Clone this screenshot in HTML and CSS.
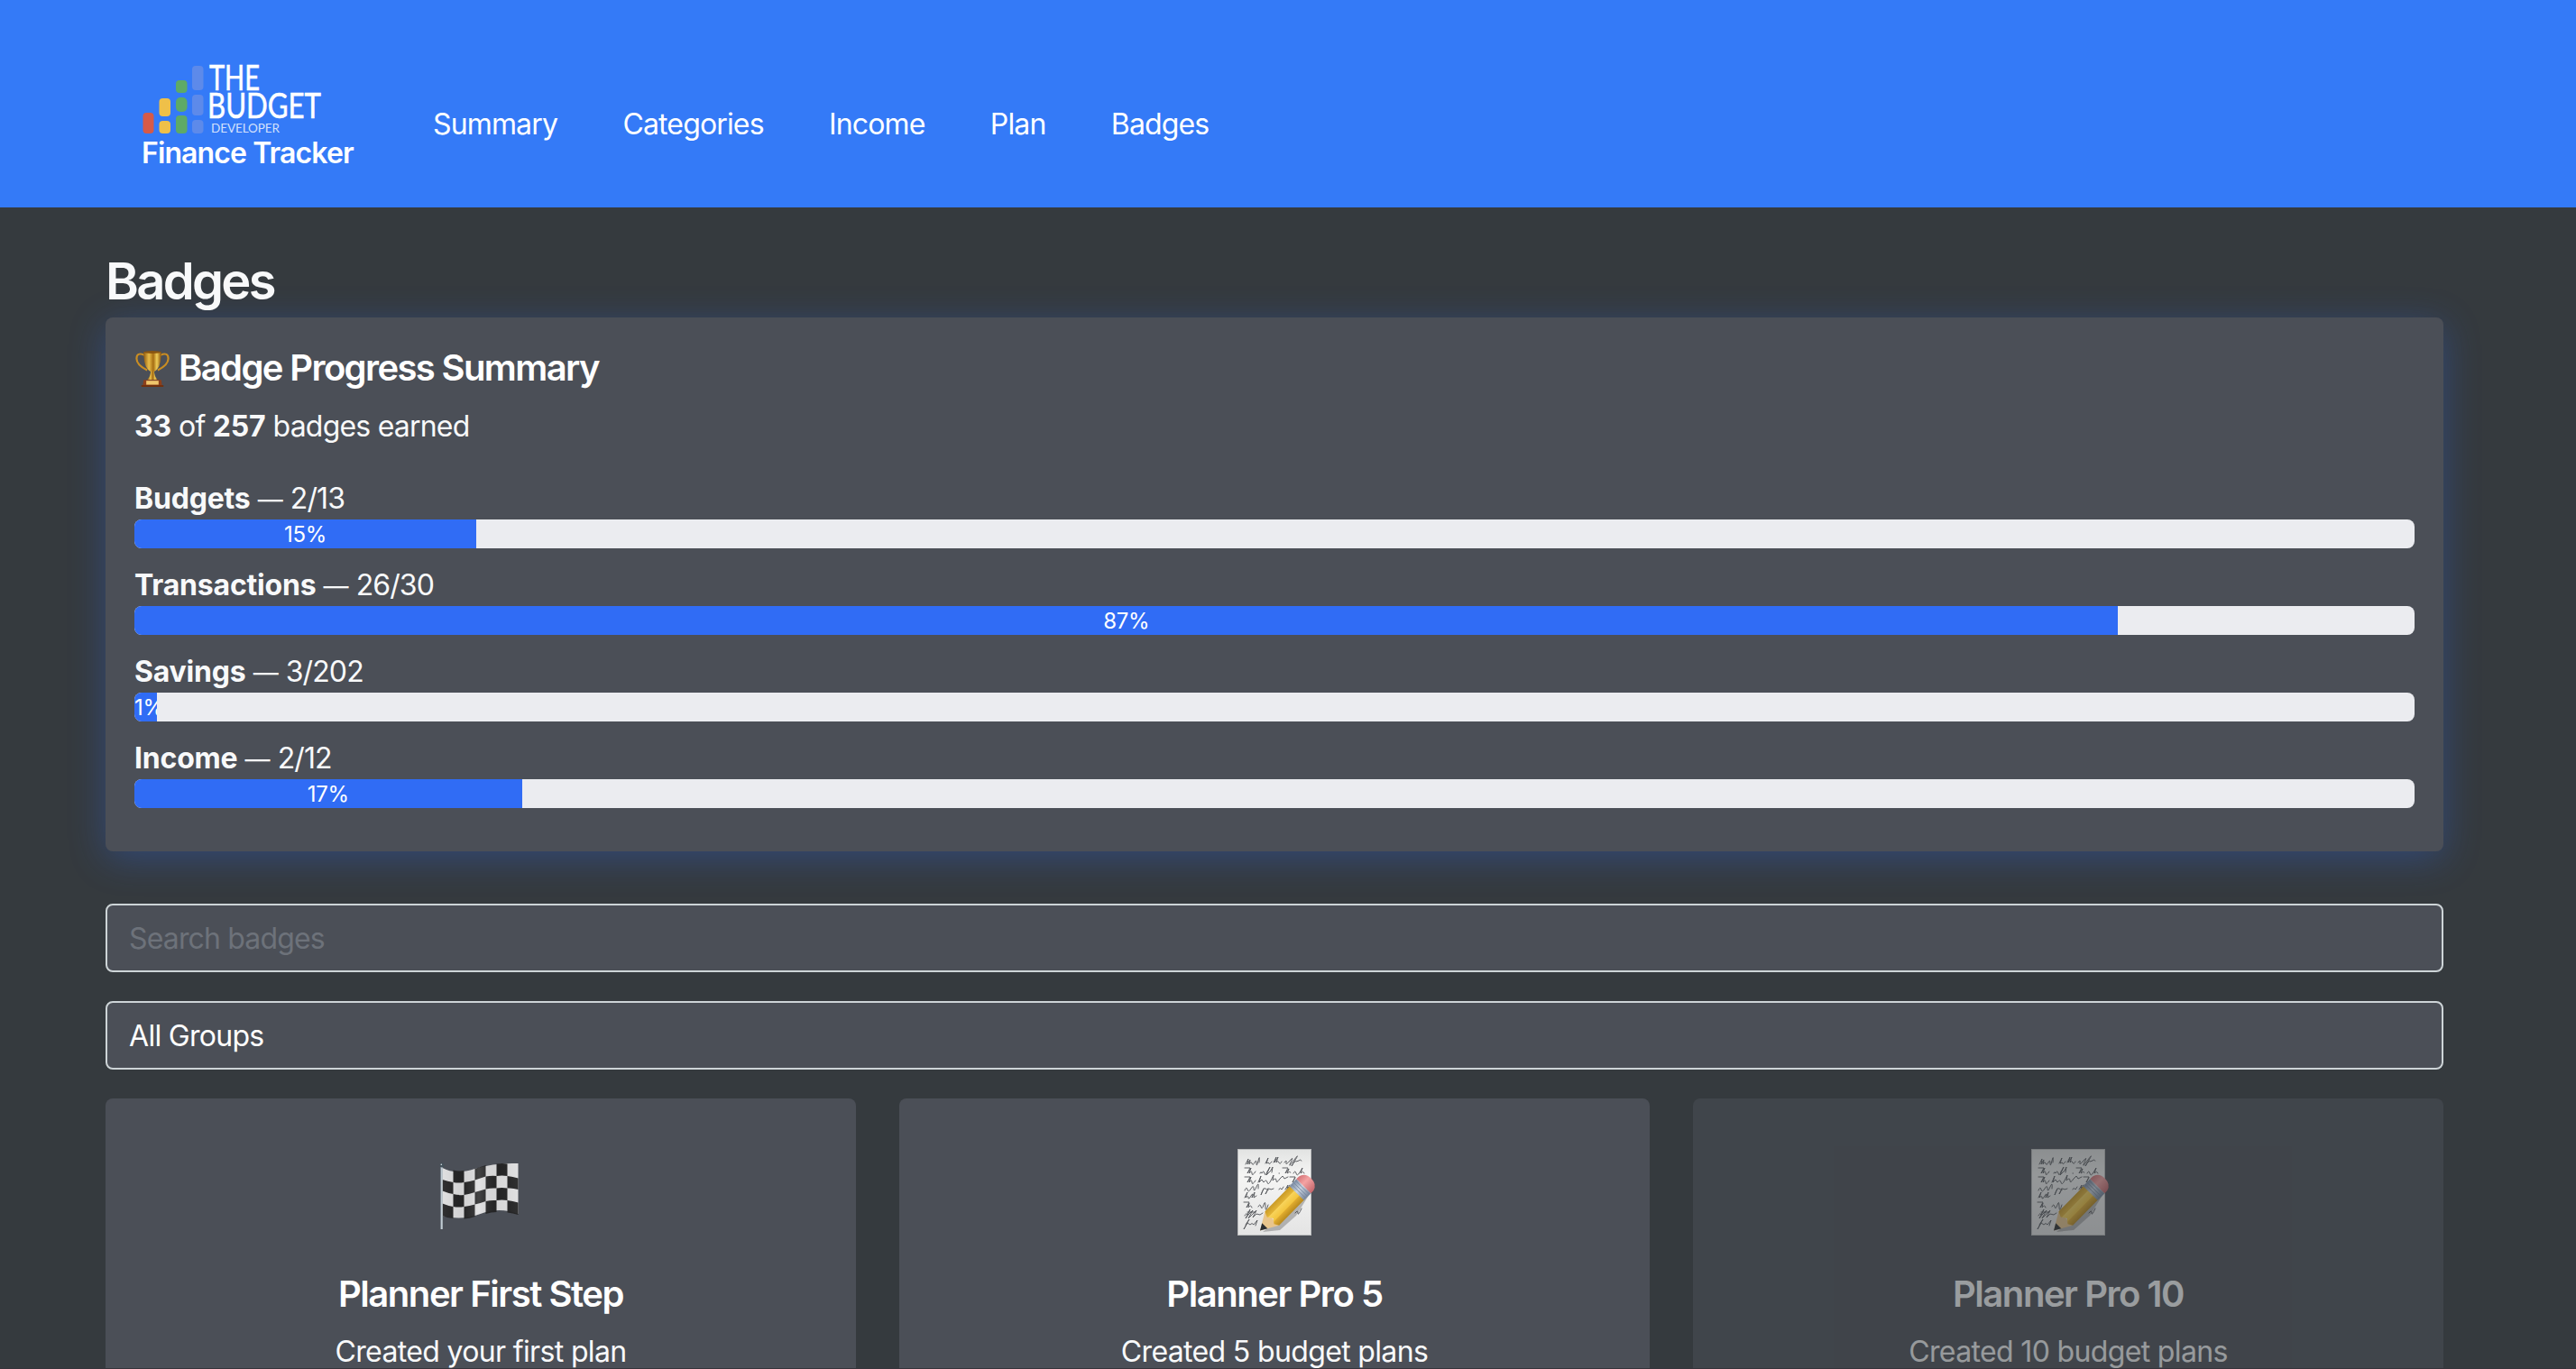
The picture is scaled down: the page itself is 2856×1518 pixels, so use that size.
FILE: index.html
```html
<!DOCTYPE html>
<html lang="en">
<head>
<meta charset="utf-8">
<title>Badges - Finance Tracker</title>
<link rel="stylesheet" href="styles.css">
</head>
<body>
<svg width="0" height="0" class="defs" aria-hidden="true">
  <defs>
    <linearGradient id="gold" x1="0" x2="1" y1="0" y2="0"><stop offset="0" stop-color="#8f5a10"/><stop offset=".3" stop-color="#e9bd48"/><stop offset=".55" stop-color="#a56c12"/><stop offset=".75" stop-color="#efcd58"/><stop offset="1" stop-color="#8a520b"/></linearGradient>
    <linearGradient id="paper" x1="0" x2="0" y1="0" y2="1"><stop offset="0" stop-color="#e2e3e2"/><stop offset=".3" stop-color="#f5f5f4"/><stop offset="1" stop-color="#e4e4e4"/></linearGradient>
    <linearGradient id="pencil" x1="0" x2="0" y1="0" y2="1"><stop offset="0" stop-color="#c99a26"/><stop offset=".3" stop-color="#e3b436"/><stop offset=".34" stop-color="#f8d35a"/><stop offset=".66" stop-color="#f3c53f"/><stop offset=".7" stop-color="#dfab2e"/><stop offset="1" stop-color="#b98a1e"/></linearGradient>
    <linearGradient id="metal" x1="0" x2="0" y1="0" y2="1"><stop offset="0" stop-color="#7b8ba3"/><stop offset=".45" stop-color="#c9d3df"/><stop offset="1" stop-color="#76859b"/></linearGradient>
    <linearGradient id="rubber" x1="0" x2="0" y1="0" y2="1"><stop offset="0" stop-color="#d47478"/><stop offset=".4" stop-color="#f4a3a3"/><stop offset="1" stop-color="#c4666b"/></linearGradient>
    <symbol id="memo" viewBox="0 0 96 104">
      <rect x="7.500" y="4.500" width="81" height="95" fill="url(#paper)" stroke="#bcbdbe" stroke-width="1"/>
      <g fill="none" stroke="#585b5f" stroke-width=".95" stroke-linecap="round" stroke-linejoin="round" transform="translate(1 0)">
        <path d="M15 21l3-6-1 6 3-5-1 5q2-4 3-1t3-1 2 1 2-3 1 2M37 20l3-6-2 6q3-2 3 0t3-2M46 19l3-6-2 6 4-6-2 6q2-3 3 0t3-1M58 19q3-4 2 0t4-2 1 2 4-3-3 7q4-7 5-5l3-1q1-2 3 0"/>
        <path d="M14 25h6l-3 6 4-6-2 6q3-4 3 0t4-2M31 31q1-3 2 0 2-4 3 0t3-2l3-5-4 9 5-5 2-4-1 6M52 31h.5M56 25h6l-3 6 4-5-2 5q3-3 4-1M68 31q2-4 3 0t4-1l3-5-2 6q3-3 4 0"/>
        <path d="M14 35h6l-3 6 4-6-2 6q3-4 3 0t4-2M29 41l3-7-2 7 3-3 2 3q3-4 4 0t4-2l3-6-1 6q4-4 4 0t4-2l3-3 2 3 4-2M64 35h6l-3 6 3-5"/>
        <path d="M14 50q2-5 3-1t4-1 3 0 3-2 2 2M35 48l-3 7q3-9 5-7t3 0-3 6q4-8 6-5l3-1M52 49q1-3 3 0l2-3M59 49l3-5-1 5 3-5"/>
        <path d="M14 58l3-6-2 6q3-3 3 0t3-2 1 2l3-6-1 6 3-2"/>
        <path d="M13 63h6l-3 6 3-5-1 5q3-4 4 0M29 68q2-4 3 0t3-2 2 2 3-2M44 68q2-4 3 0t4-4"/>
        <path d="M14 78q2-4 3-1l3-6-5 10 3-4 5-5-5 9 5-5 4-4-4 8 4-4 4 1 3-2M17 74h9M70 75q3-4 3 0t4-5"/>
        <path d="M15 88l4-6-6 11 4-7 3 2q2-3 4 0l4-5-2 6M34 88q1-3 2 0l3-6-5 11"/>
      </g>
      <path d="M35 96L66 72 88 44 93 44 72 78 54 94Z" fill="#333" opacity=".3"/>
      <g transform="translate(32 94.500) rotate(-45.500)">
        <path d="M0 0L19-11 19 11Z" fill="#e9c58c"/><path d="M0 0L7.500-4.300 7.500 4.300Z" fill="#2b2d30"/>
        <path d="M19-11H59V11H19L16 6 20 1 16-5Z" fill="url(#pencil)"/>
        <rect x="58" y="-11.300" width="11" height="22.600" fill="url(#metal)"/>
        <path d="M61-11v22M64-11v22M67-11v22" stroke="#7787a0" stroke-width=".8"/>
        <path d="M69-11.300h4q8 2 8 11.300t-8 11.300h-4Z" fill="url(#rubber)"/>
      </g>
    </symbol>
  </defs>
</svg>
<header class="navbar">
  <a class="brand">
    <svg class="logo" viewBox="0 0 202 80">
      <g transform="translate(.5 1)"><rect x="0" y="55" width="12" height="23" rx="4" fill="#d65a48"/>
      <rect x="18" y="39" width="12.500" height="20" rx="4" fill="#efc049"/><rect x="18" y="64" width="12.500" height="14" rx="4" fill="#efc049"/>
      <g fill="#5eaa66"><rect x="36.500" y="19" width="12.500" height="14" rx="4"/><rect x="36.500" y="38" width="12.500" height="16" rx="5"/><rect x="36.500" y="58" width="12.500" height="20" rx="4"/></g>
      <g fill="#5d8aea"><rect x="54.500" y="3" width="12.500" height="27" rx="4"/><rect x="54.500" y="35" width="12.500" height="23" rx="4"/><rect x="54.500" y="63" width="12.500" height="15" rx="4"/></g></g>
      <g class="logo-text"><text x="74" y="31" font-size="39" textLength="56" lengthAdjust="spacingAndGlyphs">THE</text>
      <text x="72" y="62" font-size="39" textLength="126" lengthAdjust="spacingAndGlyphs">BUDGET</text>
      <text class="logo-small" x="76" y="78" font-size="13.500" textLength="76" lengthAdjust="spacing">DEVELOPER</text></g>
    </svg>
    <span class="brand-name">Finance Tracker</span>
  </a>
  <nav class="links"><a>Summary</a><a>Categories</a><a>Income</a><a>Plan</a><a>Badges</a></nav>
</header>
<main class="container">
  <h1 class="page-title">Badges</h1>
  <section class="summary">
    <h2 class="summary-title"><svg class="trophy" viewBox="0 0 40 42">
      <path d="M11 6Q2 2 2 10q0 7 12 13M29 6q9-4 9 4 0 7-12 13" fill="none" stroke="#c98d22" stroke-width="2.200"/>
      <path d="M10 2h20q0 14-4 19-3 4-6 4t-6-4Q10 16 10 2Z" fill="url(#gold)"/><ellipse cx="20" cy="2.500" rx="10" ry="1.500" fill="#8a5510"/>
      <path d="M18 24h4q0 6 4 10H14q4-4 4-10Z" fill="url(#gold)"/><path d="M10 34h20l1 7H9Z" fill="#8c3f1b"/><rect x="13" y="35" width="14" height="4.500" fill="#efc66c"/><path d="M7.500 40h25v2h-25Z" fill="#70300f"/>
    </svg>Badge Progress Summary</h2>
    <p class="earned"><strong>33</strong> of <strong>257</strong> badges earned</p>
    <div class="group"><p class="group-name"><strong>Budgets</strong> <span class="dash">—</span> 2/13</p><div class="progress"><div class="bar" style="width:15%">15%</div></div></div>
    <div class="group"><p class="group-name"><strong>Transactions</strong> <span class="dash">—</span> 26/30</p><div class="progress"><div class="bar" style="width:87%">87%</div></div></div>
    <div class="group"><p class="group-name"><strong>Savings</strong> <span class="dash">—</span> 3/202</p><div class="progress"><div class="bar" style="width:1%">1%</div></div></div>
    <div class="group"><p class="group-name"><strong>Income</strong> <span class="dash">—</span> 2/12</p><div class="progress"><div class="bar" style="width:17%">17%</div></div></div>
  </section>
  <input class="control search" type="text" placeholder="Search badges">
  <select class="control groups"><option>All Groups</option></select>
  <div class="badges">
    <article class="badge">
      <svg class="badge-icon" viewBox="0 0 96 104">
        <defs><linearGradient id="fold" x1="0" x2="1" y1="0" y2="0"><stop offset="0" stop-color="#fff" stop-opacity=".05"/><stop offset=".22" stop-color="#000" stop-opacity=".05"/><stop offset=".48" stop-color="#fff" stop-opacity=".14"/><stop offset=".75" stop-color="#000" stop-opacity=".03"/><stop offset="1" stop-color="#fff" stop-opacity=".05"/></linearGradient></defs>
        <g transform="translate(2.500 4)">
        <path d="M3 21Q17 29 39 22T87 16V72Q66 64 45 72T3 74Z" fill="#dededf"/>
        <g fill="#252526">
          <path d="M15 23.500q6 1.500 12 .5V37q-6 1-12 0ZM39 22q6-2 12-4V30.500q-6 2-12 4ZM63 16.500q6-1 12 0V30q-6-1-12 0Z"/>
          <path d="M3 34q6 2 12 3V50q-6-1-12-3.500ZM27 37q6-1 12-2.500V48q-6 2-12 3ZM51 30.500q6-1 12-.5V43.500q-6-.5-12 1ZM75 30q6 .5 12 2.500V45q-6-2-12-1.500Z"/>
          <path d="M15 50q6 1.500 12 1V64q-6 1-12 0ZM39 48q6-2 12-3.500V58q-6 2-12 3.500ZM63 43.500q6-1 12 0V57q-6-1-12 0Z"/>
          <path d="M3 60.500q6 2.500 12 3.500V77q-6 0-12-3ZM27 64q6-1 12-2.500V75q-6 2-12 2.500ZM51 58q6-1.500 12-1V70q-6 0-12 2ZM75 57q6 .5 12 2.500V73q-6-2-12-2.500Z"/>
        </g>
        <path d="M3 21Q17 29 39 22T87 16V72Q66 64 45 72T3 74Z" fill="url(#fold)"/>
        <path d="M2 20V89" stroke="#a9b7c0" stroke-width="2"/><path d="M2.500 20V89" stroke="#e5edf1" stroke-width=".8"/><circle cx="2.500" cy="18" r="2.500" fill="#44515a"/><circle cx="1.800" cy="17.200" r=".8" fill="#dce5ec"/>
        </g>
      </svg>
      <h3 class="badge-title">Planner First Step</h3><p class="badge-text">Created your first plan</p>
    </article>
    <article class="badge"><svg class="badge-icon"><use href="#memo"/></svg><h3 class="badge-title">Planner Pro 5</h3><p class="badge-text">Created 5 budget plans</p></article>
    <article class="badge locked"><svg class="badge-icon"><use href="#memo"/></svg><h3 class="badge-title">Planner Pro 10</h3><p class="badge-text">Created 10 budget plans</p></article>
  </div>
</main>
</body>
</html>
```
FILE: styles.css
```css
* { box-sizing: border-box; }
html, body { height: 100%; overflow: hidden; }
body { margin: 0; background: #353a3e; color: #f8f9fa; font: 400 32px/48px Inter, "Liberation Sans", sans-serif; letter-spacing: -0.65px; }
body::after { content: ""; position: fixed; left: 0; right: 0; bottom: 0; height: 1px; background: #36343b; }
h1, h2, h3, p { margin: 0; }
.defs { position: absolute; }
.navbar { height: 230px; background: #347af7; color: #fff; display: flex; align-items: flex-start; padding: 69px 0 0 158px; }
.brand { display: flex; flex-direction: column; width: 322px; }
.logo { width: 202px; height: 80px; overflow: visible; }
.logo-text { font-family: Lato, sans-serif; fill: #fff; stroke: #fff; stroke-width: .6px; letter-spacing: 0; }
.logo-small { fill: #d3e1fc; stroke: none; }
.brand-name { font-weight: 560; line-height: 42px; letter-spacing: -0.9px; margin-left: -1px; }
.links { display: flex; gap: 72.3px; padding-top: 45px; letter-spacing: -0.85px; }
.container { padding: 49px 147px 0 117px; }
.page-title { font-size: 56px; line-height: 67px; font-weight: 600; letter-spacing: -2.7px; margin-bottom: 6px; }
.summary { height: 592px; padding: 32px; border-radius: 8px; background: #4b4f57; box-shadow: 0 8px 40px rgba(48, 110, 247, .3); margin-bottom: 58px; }
.summary-title { display: flex; align-items: center; gap: 9px; font-size: 40px; line-height: 48px; font-weight: 600; letter-spacing: -1.62px; color: #fff; margin-bottom: 16px; }
.trophy { width: 40px; height: 41px; }
.earned { padding-top: 2px; line-height: 46px; margin-bottom: 32px; letter-spacing: -0.8px; }
.earned strong, .group-name strong { letter-spacing: -0.2px; }
.group { margin-bottom: 16px; }
.group-name { height: 48px; padding-top: 2px; line-height: 46px; letter-spacing: -0.9px; }
.dash { font-size: 28px; line-height: 0; letter-spacing: 0; }
.progress { height: 32px; border-radius: 8px; overflow: hidden; background: #ebecf0; }
.bar { height: 32px; padding-top: 1px; background: #306cf5; color: #fff; font-size: 24px; line-height: 32px; letter-spacing: -0.3px; display: flex; justify-content: safe center; overflow: hidden; }
.control { display: block; width: 100%; height: 76px; margin: 0 0 32px; padding: 12px 24px; border: 2px solid #cdd4d7; border-radius: 8px; background: #4b4f57; color: #fff; font: inherit; letter-spacing: -0.85px; appearance: none; outline: 0; }
.groups { padding: 13px 24px 11px; letter-spacing: -0.7px; }
.control::placeholder { color: #6d727a; opacity: 1; }
.badges { display: grid; grid-template-columns: repeat(3, 1fr); gap: 48px; }
.badge { height: 420px; padding: 52px 32px; border-radius: 8px; background: #4b4f57; display: flex; flex-direction: column; align-items: center; }
.locked { opacity: .5; }
.badge-icon { width: 96px; height: 104px; margin-bottom: 37px; }
.badge-title { font-size: 40px; line-height: 48px; font-weight: 600; letter-spacing: -1.45px; color: #fff; margin-bottom: 16px; }
```
